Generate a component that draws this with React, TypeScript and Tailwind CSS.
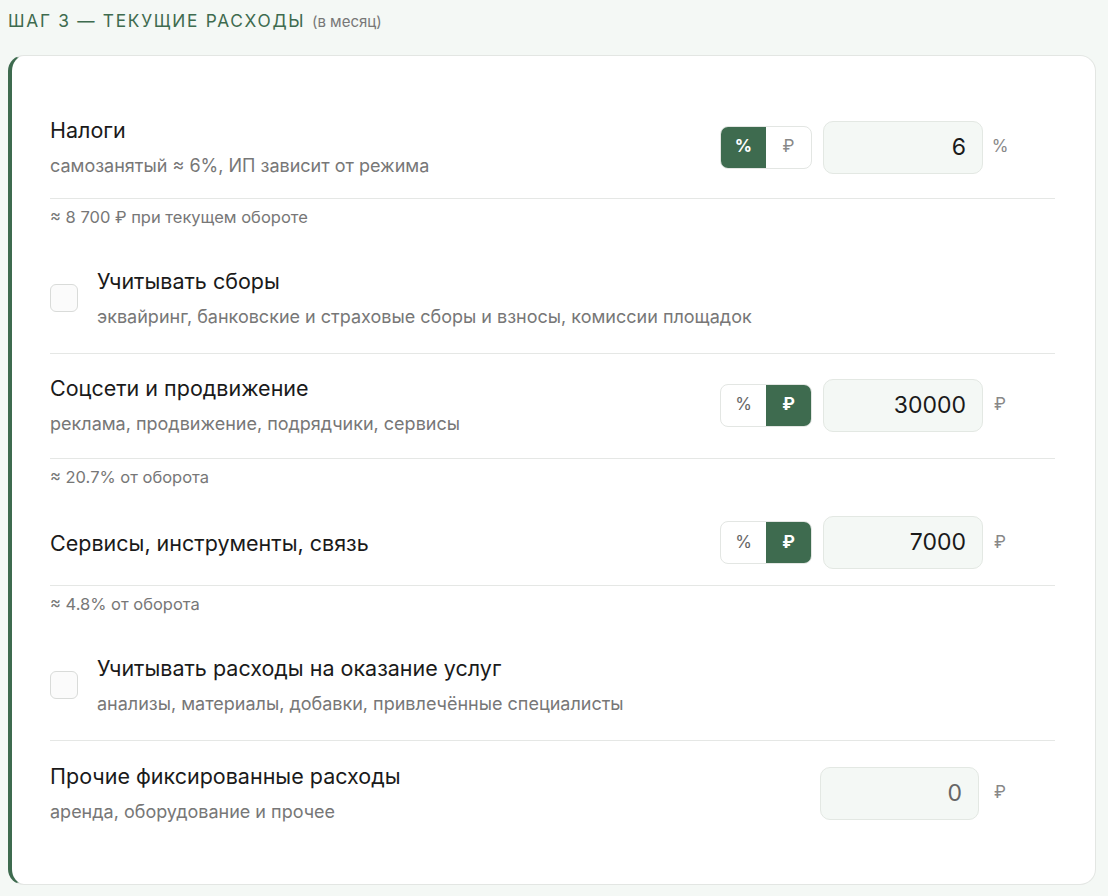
import React, { useState } from 'react';

type Mode = 'pct' | 'rub';

const font = { fontFamily: 'Inter, "Noto Sans", sans-serif' };

const Toggle: React.FC<{ mode: Mode; onChange: (m: Mode) => void }> = ({ mode, onChange }) => (
  <div className="flex h-[43px] w-[92px] overflow-hidden rounded-lg border border-[#e3e6e3] bg-white">
    <button
      onClick={() => onChange('pct')}
      className={`flex-1 text-[17px] ${mode === 'pct' ? 'bg-[#3e6b4f] font-bold text-white' : 'text-[#666]'}`}
    >
      %
    </button>
    <button
      onClick={() => onChange('rub')}
      className={`flex-1 text-[17px] ${mode === 'rub' ? 'bg-[#3e6b4f] font-bold text-white' : 'text-[#888]'}`}
    >
      ₽
    </button>
  </div>
);

const Amount: React.FC<{ value: string; muted?: boolean; className?: string }> = ({ value, muted, className }) => (
  <div
    className={`flex h-[53px] items-center justify-end rounded-[10px] border border-[#e3e8e3] bg-[#f4f8f5] pr-[16px] text-[23px] ${
      muted ? 'text-[#666]' : 'text-[#1a1a1a]'
    } ${className ?? 'w-[160px]'}`}
  >
    {value}
  </div>
);

const Unit: React.FC<{ children: React.ReactNode }> = ({ children }) => (
  <span className="w-[34px] text-center text-[17px] text-[#888]">{children}</span>
);

const Note: React.FC<{ children: React.ReactNode }> = ({ children }) => (
  <p className="pt-2 pb-5 text-[16.5px] leading-5 text-[#777]">{children}</p>
);

const Title: React.FC<{ children: React.ReactNode }> = ({ children }) => (
  <div className="text-[21.5px] leading-7 text-[#1a1a1a]">{children}</div>
);

const Hint: React.FC<{ children: React.ReactNode }> = ({ children }) => (
  <div className="mt-[10px] text-[18px] leading-6 text-[#777]">{children}</div>
);

const CheckRow: React.FC<{ title: string; hint: string }> = ({ title, hint }) => {
  const [on, setOn] = useState(false);
  return (
    <div className="flex items-center gap-[19px] border-b border-[#e5e7e5] pt-5 pb-6">
      <button
        onClick={() => setOn(!on)}
        className={`h-[28px] w-[28px] shrink-0 rounded-md border-[1.5px] ${on ? 'border-[#3e6b4f] bg-[#3e6b4f]' : 'border-[#d9dbd9] bg-[#fbfbfb]'}`}
      />
      <div>
        <Title>{title}</Title>
        <Hint>{hint}</Hint>
      </div>
    </div>
  );
};

export default function App() {
  const [tax, setTax] = useState<Mode>('pct');
  const [promo, setPromo] = useState<Mode>('rub');
  const [tools, setTools] = useState<Mode>('rub');

  return (
    <div className="min-h-screen bg-[#f4f8f5] pt-[9px] pr-3 pb-3 pl-2" style={font}>
      <h2 className="mb-[21px] text-[17.3px] leading-6 tracking-[0.1em] text-[#3e6b4f]">
        ШАГ 3 — ТЕКУЩИЕ РАСХОДЫ <span className="text-[15px] tracking-normal text-[#777]">(в месяц)</span>
      </h2>

      <div className="rounded-2xl border border-l-4 border-[#e3e6e3] border-l-[#3e6b4f] bg-white pt-10 pr-10 pb-10 pl-[38px]">
        {/* Налоги */}
        <div className="flex items-center justify-between border-b border-[#e5e7e5] pt-5 pb-5">
          <div>
            <Title>Налоги</Title>
            <Hint>самозанятый ≈ 6%, ИП зависит от режима</Hint>
          </div>
          <div className="flex items-center">
            <Toggle mode={tax} onChange={setTax} />
            <Amount value="6" className="ml-[11px] w-[160px]" />
            <Unit>%</Unit>
            <div className="w-[38px]" />
          </div>
        </div>
        <Note>≈ 8 700 ₽ при текущем обороте</Note>

        <CheckRow title="Учитывать сборы" hint="эквайринг, банковские и страховые сборы и взносы, комиссии площадок" />

        {/* Соцсети */}
        <div className="flex items-center justify-between border-b border-[#e5e7e5] pt-5 pb-[22px]">
          <div>
            <Title>Соцсети и продвижение</Title>
            <Hint>реклама, продвижение, подрядчики, сервисы</Hint>
          </div>
          <div className="flex items-center">
            <Toggle mode={promo} onChange={setPromo} />
            <Amount value="30000" className="ml-[11px] w-[160px]" />
            <Unit>₽</Unit>
            <div className="w-[38px]" />
          </div>
        </div>
        <Note>≈ 20.7% от оборота</Note>

        {/* Сервисы */}
        <div className="flex items-center justify-between border-b border-[#e5e7e5] pt-[9px] pb-4">
          <Title>Сервисы, инструменты, связь</Title>
          <div className="flex items-center">
            <Toggle mode={tools} onChange={setTools} />
            <Amount value="7000" className="ml-[11px] w-[160px]" />
            <Unit>₽</Unit>
            <div className="w-[38px]" />
          </div>
        </div>
        <Note>≈ 4.8% от оборота</Note>

        <CheckRow title="Учитывать расходы на оказание услуг" hint="анализы, материалы, добавки, привлечённые специалисты" />

        {/* Прочие */}
        <div className="flex items-center justify-between pt-[21px] pb-5">
          <div>
            <Title>Прочие фиксированные расходы</Title>
            <Hint>аренда, оборудование и прочее</Hint>
          </div>
          <div className="flex items-center">
            <Amount value="0" muted className="mr-1 w-[159px]" />
            <Unit>₽</Unit>
            <div className="w-[38px]" />
          </div>
        </div>
      </div>
    </div>
  );
}
